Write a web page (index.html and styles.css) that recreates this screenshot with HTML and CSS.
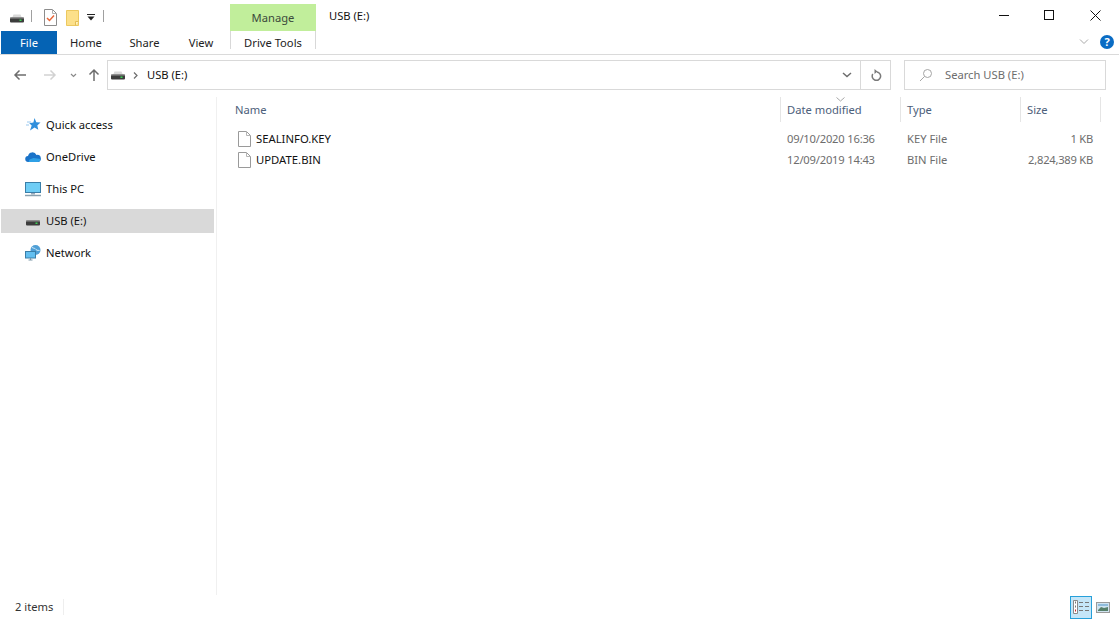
FILE: index.html
```html
<!DOCTYPE html>
<html lang="en">
<head>
<meta charset="utf-8">
<title>USB (E:)</title>
<link rel="stylesheet" href="styles.css">
</head>
<body>
<svg class="defs" width="0" height="0" aria-hidden="true">
  <defs>
    <symbol id="drive" viewBox="0 0 16 16">
      <path d="M3 8 4.500 4.500h7L13 8z" fill="#d9d9d9"/>
      <rect x="1" y="7.500" width="14" height="5" rx="1" fill="#3c3c3c"/>
      <rect x="1" y="7.500" width="14" height="1" fill="#8f8f8f"/>
      <rect x="10.500" y="9.500" width="2" height="1.500" fill="#39d353"/>
    </symbol>
    <symbol id="file" viewBox="0 0 13 16">
      <path d="M.5.500h8l4 4v11H.5z" fill="#fff" stroke="#9a9a9a"/>
      <path d="M8.500.500v4h4" fill="none" stroke="#b5b5b5"/>
    </symbol>
  </defs>
</svg>
<div class="window">
  <header class="titlebar">
    <div class="qat">
      <svg class="ic-drive-q" width="16" height="16"><use href="#drive"/></svg>
      <span class="qsep"></span>
      <svg class="ic-props" width="13" height="17" viewBox="0 0 13 17"><path d="M.5.500h8l4 4v12H.5z" fill="#fff" stroke="#8c8c8c"/><path d="M8.500.500v4h4" fill="none" stroke="#b0b0b0"/><path d="M3 9l2.500 2.500L10 6.500" fill="none" stroke="#e8673a" stroke-width="1.500"/></svg>
      <svg class="ic-folder" width="13" height="16" viewBox="0 0 13 16"><path d="M.5.500h12v15H.5z" fill="#fce08a" stroke="#ecc85f"/><path d="M9.500 15.500v-4h3" fill="#fff3c4" stroke="#e3bd55"/></svg>
      <svg class="ic-qdown" width="8" height="7" viewBox="0 0 8 7"><path d="M0 .5h8" stroke="#222"/><path d="M.5 2.500h7L4 6.500z" fill="#222"/></svg>
      <span class="qsep qsep-end"></span>
    </div>
    <div class="manage">Manage</div>
    <div class="title">USB (E:)</div>
    <div class="winbtns">
      <svg width="11" height="11" viewBox="0 0 11 11"><path d="M0 5.500h10" stroke="#111"/></svg>
      <svg class="win-max" width="11" height="11" viewBox="0 0 11 11"><rect x=".5" y=".5" width="9" height="9" fill="none" stroke="#111"/></svg>
      <svg width="11" height="11" viewBox="0 0 11 11"><path d="M.5.500l10 10M10.500.500l-10 10" stroke="#111"/></svg>
    </div>
  </header>

  <nav class="ribbon">
    <div class="tab-file">File</div>
    <div class="tab tab-home">Home</div>
    <div class="tab tab-share">Share</div>
    <div class="tab tab-view">View</div>
    <div class="tab-drive">Drive Tools</div>
    <div class="ribbon-end">
      <svg width="10" height="6" viewBox="0 0 10 6"><path d="M1 .5l4 4 4-4" fill="none" stroke="#a8a8a8"/></svg>
      <svg class="help" width="14" height="14" viewBox="0 0 14 14"><circle cx="7" cy="7" r="7" fill="#0a6cc4"/><text x="7" y="11" text-anchor="middle" class="help-q">?</text></svg>
    </div>
  </nav>

  <div class="addrrow">
    <div class="navbtns">
      <svg width="14" height="12" viewBox="0 0 14 12"><path d="M13 6H2M6.500 1.500 2 6l4.500 4.500" fill="none" stroke="#6d6d6d" stroke-width="1.500"/></svg>
      <svg class="fwd" width="14" height="12" viewBox="0 0 14 12"><path d="M1 6h11M7.500 1.500 12 6l-4.500 4.500" fill="none" stroke="#d2d2d2" stroke-width="1.500"/></svg>
      <svg class="recent" width="7" height="5" viewBox="0 0 7 5"><path d="M1 1l2.500 2.500L6 1" fill="none" stroke="#8a8a8a" stroke-width="1.200"/></svg>
      <svg class="up" width="12" height="14" viewBox="0 0 12 14"><path d="M6 13V2M1.500 6.500 6 2l4.500 4.500" fill="none" stroke="#6d6d6d" stroke-width="1.500"/></svg>
    </div>
    <div class="addr">
      <svg class="addr-drive" width="16" height="16"><use href="#drive"/></svg>
      <svg class="crumb" width="5" height="7" viewBox="0 0 5 7"><path d="M1 .5l3 3-3 3" fill="none" stroke="#6d6d6d" stroke-width="1.200"/></svg>
      <span class="addr-text">USB (E:)</span>
      <svg class="addr-down" width="10" height="6" viewBox="0 0 10 6"><path d="M1 1l4 3.500L9 1" fill="none" stroke="#6d6d6d" stroke-width="1.500"/></svg>
      <div class="refresh">
        <svg width="12" height="12" viewBox="0 0 12 12"><path d="M6.500 2.500A4.200 4.200 0 1 1 2.300 4.500" transform="translate(.5 .5)" fill="none" stroke="#7a7a7a" stroke-width="1.500"/><path d="M4.500 0v5l3-2.500z" fill="#7a7a7a"/></svg>
      </div>
    </div>
    <div class="search">
      <svg width="14" height="14" viewBox="0 0 14 14"><circle cx="8.500" cy="5.500" r="4" fill="none" stroke="#a5a5a5"/><path d="M5.500 8.500 1 13" stroke="#a5a5a5"/></svg>
      <span>Search USB (E:)</span>
    </div>
  </div>

  <main class="main">
    <aside class="sidebar">
      <div class="navitem">
        <svg width="16" height="16" viewBox="0 0 16 16"><path d="M9.500 1l1.800 4.200 4.200.4-3.200 2.800 1 4.400-3.800-2.300-4.500 3 1.700-5.100-2.500-2.200 4.200-.6z" fill="#2f8fdc"/><path d="M2 5h4M1 8h3" stroke="#9ac8ee"/></svg>
        <span>Quick access</span>
      </div>
      <div class="navitem">
        <svg width="16" height="16" viewBox="0 0 16 16"><path d="M3.500 13a3 3 0 0 1-.500-6A4.500 4.500 0 0 1 11.500 6 3.500 3.500 0 0 1 13 13z" fill="#1a73c9"/><path d="M3.500 13h9.500A3 3 0 0 0 15.500 10l-7-1-4 1.500z" fill="#2ea0e6"/></svg>
        <span>OneDrive</span>
      </div>
      <div class="navitem">
        <svg width="16" height="16" viewBox="0 0 16 16"><rect x=".5" y="1.500" width="15" height="10" fill="#6fcdf5" stroke="#3a7ea8"/><path d="M6 12h4v1.500H6z" fill="#9ab"/><path d="M0 14.500h16" stroke="#8aa0ae" stroke-width="1.500"/></svg>
        <span>This PC</span>
      </div>
      <div class="navitem selected">
        <svg width="16" height="16"><use href="#drive"/></svg>
        <span>USB (E:)</span>
      </div>
      <div class="navitem">
        <svg width="16" height="16" viewBox="0 0 16 16"><circle cx="10.500" cy="5" r="5" fill="#4f9fd6"/><path d="M7 2.500c2 1 3 .5 4 2s3 .5 3.500 1" fill="none" stroke="#d8eefa"/><rect x=".5" y="6.500" width="10" height="6.500" fill="#63bff0" stroke="#3a7ea8"/><path d="M3.500 15h4M5.500 13v2" stroke="#7c97a8"/></svg>
        <span>Network</span>
      </div>
    </aside>

    <section class="list">
      <div class="head">
        <div class="col col-name">Name</div>
        <div class="col col-date">Date modified
          <svg class="sort" width="9" height="5" viewBox="0 0 9 5"><path d="M.5.500l4 3.500 4-3.500" fill="none" stroke="#a8a8a8"/></svg>
        </div>
        <div class="col col-type">Type</div>
        <div class="col col-size">Size</div>
      </div>
      <div class="rows">
        <div class="row">
          <div class="cell-name"><svg width="13" height="16"><use href="#file"/></svg><span>SEALINFO.KEY</span></div>
          <div class="cell-date">09/10/2020 16:36</div>
          <div class="cell-type">KEY File</div>
          <div class="cell-size">1 KB</div>
        </div>
        <div class="row">
          <div class="cell-name"><svg width="13" height="16"><use href="#file"/></svg><span>UPDATE.BIN</span></div>
          <div class="cell-date">12/09/2019 14:43</div>
          <div class="cell-type">BIN File</div>
          <div class="cell-size">2,824,389 KB</div>
        </div>
      </div>
    </section>
  </main>

  <footer class="status">
    <span class="count">2 items</span>
    <div class="views">
      <div class="view-details">
        <svg width="16" height="14" viewBox="0 0 16 14"><path d="M.5.500h4v13h-4z" fill="#fff" stroke="#8a8a8a"/><path d="M2 2.500h1M2 6.500h1" stroke="#777" stroke-width="2"/><path d="M2 10.500h1" stroke="#c22" stroke-width="2"/><path d="M6 2.500h4M12 2.500h4M6 6.500h4M12 6.500h4M6 10.500h4M12 10.500h4" stroke="#777"/></svg>
      </div>
      <svg class="view-large" width="14" height="11" viewBox="0 0 14 11"><rect x=".5" y=".5" width="13" height="10" fill="#cfe3f0" stroke="#9a9a9a"/><path d="M2 8l3-3 3 1 4-1v4H2z" fill="#56806a"/><path d="M2 2h10v2H2z" fill="#8fbcdc"/></svg>
    </div>
  </footer>
</div>
</body>
</html>
```
FILE: styles.css
```css
* { box-sizing: border-box; }
html, body { margin: 0; padding: 0; background: #fff; }
body { font-family: "Noto Sans", "Open Sans", sans-serif; font-size: 11.2px; color: #1a1a1a; overflow: hidden; }
.defs { display: block; height: 0; }
svg { display: block; flex: none; }

.window { width: 1119px; height: 619px; display: flex; flex-direction: column; }

.titlebar { height: 31px; display: flex; flex: none; }
.qat { width: 230px; display: flex; align-items: center; padding: 4px 0 0 9px; }
.qsep { width: 1px; height: 12px; background: #a0a0a0; margin: 0 0 3px 6px; }
.qsep-end { margin-left: 8px; }
.ic-props { margin: 0 0 0 12px; }
.ic-folder { margin: 0 0 0 9px; }
.ic-qdown { margin: 0 0 0 8px; }
.manage { width: 86px; margin-top: 4px; background: #c1ee9b; color: #3c4a3c; text-align: center; line-height: 28px; }
.title { padding: 7px 0 0 13px; line-height: 17px; color: #111; }
.winbtns { margin-left: auto; width: 138px; display: flex; justify-content: space-between; padding: 10px 18px 0 18px; height: 24px; }
.win-max { margin-right: 1px; }

.ribbon { height: 24px; display: flex; flex: none; border-bottom: 1px solid #dadada; padding-left: 1px; position: relative; }
.tab-file { width: 56px; height: 23px; background: #0563b4; color: #fff; text-align: center; line-height: 24px; }
.tab { line-height: 24px; color: #222; text-align: center; }
.tab-home { width: 58px; }
.tab-share { width: 58px; padding-left: 1px; }
.tab-view { width: 56px; }
.tab-drive { width: 86px; height: 18px; margin-left: 1px; border: 1px solid #d8d8d8; border-top: 0; border-bottom: 0; text-align: center; line-height: 24px; color: #222; }
.ribbon-end { margin-left: auto; display: flex; align-items: center; gap: 11px; padding: 0 5px 0 0; height: 22px; }
.help-q { fill: #fff; font: 700 11px "Noto Sans", sans-serif; }

.addrrow { height: 42px; display: flex; flex: none; padding-top: 5px; }
.navbtns { width: 107px; height: 30px; display: flex; align-items: center; padding-left: 13px; }
.fwd { margin-left: 16px; }
.recent { margin-left: 13px; }
.up { margin-left: 11px; }
.addr { width: 784px; height: 30px; border: 1px solid #d9d9d9; display: flex; align-items: center; padding-left: 2px; }
.addr-text { margin-left: 9px; color: #111; padding-bottom: 2px; }
.crumb { margin-left: 7px; }
.addr-down { margin-left: auto; margin-right: 8px; }
.refresh { width: 30px; height: 28px; border-left: 1px solid #d9d9d9; display: flex; align-items: center; justify-content: center; }
.search { width: 202px; height: 30px; margin-left: 13px; border: 1px solid #d9d9d9; display: flex; align-items: center; gap: 12px; padding-left: 14px; color: #6d6d6d; }
.search span { padding-bottom: 2px; }

.main { flex: 1; display: flex; min-height: 0; }
.sidebar { width: 217px; flex: none; border-right: 1px solid #f0f0f0; padding: 16px 2px 0 1px; display: flex; flex-direction: column; gap: 8px; }
.navitem { height: 24px; display: flex; align-items: center; gap: 5px; padding-left: 24px; color: #111; }
.navitem span { padding-bottom: 2px; }
.navitem.selected { background: #d9d9d9; }

.list { flex: 1; padding-left: 1px; }
.head { height: 26px; display: flex; color: #4c607a; }
.col { height: 25px; line-height: 25px; padding-left: 6px; border-right: 1px solid #e5e5e5; position: relative; }
.col-name { width: 563px; padding-left: 17px; }
.col-date { width: 120px; }
.col-type { width: 120px; }
.col-size { width: 80px; }
.sort { position: absolute; top: 0; left: 55px; }

.rows { padding-top: 5px; }
.row { height: 21px; display: flex; align-items: center; color: #6d6d6d; }
.cell-name { width: 563px; display: flex; align-items: center; gap: 5px; padding-left: 20px; color: #111; font-size: 11.3px; }
.cell-date { width: 120px; padding-left: 6px; letter-spacing: -0.2px; }
.cell-type { width: 120px; padding-left: 6px; }
.cell-size { width: 80px; padding-right: 8px; text-align: right; letter-spacing: -0.25px; }

.status { height: 24px; flex: none; display: flex; align-items: center; justify-content: space-between; padding: 0 9px 0 15px; color: #333; }
.count { border-right: 1px solid #eee; padding-right: 10px; line-height: 16px; }
.views { display: flex; align-items: center; gap: 4px; }
.view-details { width: 22px; height: 23px; background: #c5e6f8; border: 1px solid #26a0da; display: flex; align-items: center; justify-content: center; }
```
